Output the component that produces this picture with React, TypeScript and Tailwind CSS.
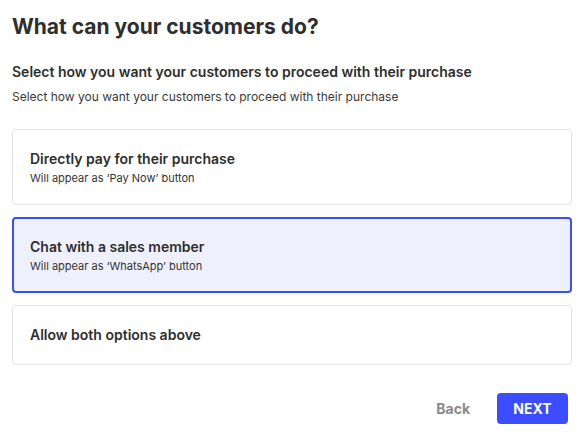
import { useState } from "react"

const options = [
  { id: "pay", title: "Directly pay for their purchase", note: "Will appear as ‘Pay Now’ button" },
  { id: "chat", title: "Chat with a sales member", note: "Will appear as ‘WhatsApp’ button" },
  { id: "both", title: "Allow both options above", note: "" },
]

export default function App() {
  const [selected, setSelected] = useState("chat")

  return (
    <div className="min-h-[436px] w-[585px] bg-white pl-3 pr-[13px] pt-[11px] text-[#2e2e2e] [font-family:Inter,'Liberation_Sans',sans-serif]">
      <h1 className="text-[21px] font-bold leading-[32px]">What can your customers do?</h1>

      <h2 className="mt-[19px] text-[14px] font-semibold leading-[20px]">
        Select how you want your customers to proceed with their purchase
      </h2>
      <p className="mt-[7px] text-[12px] leading-[16px] text-[#3a3a3a]">
        Select how you want your customers to proceed with their purchase
      </p>

      <div className="mt-[24px] flex flex-col gap-[12px]">
        {options.map((o) => {
          const active = selected === o.id
          return (
            <button
              key={o.id}
              onClick={() => setSelected(o.id)}
              className={
                active
                  ? "rounded-[4px] border-2 border-[#3c4cff] bg-[#eef0fd] px-[16px] py-[17px] text-left"
                  : "rounded-[4px] border border-[#e6e6e6] bg-white px-[17px] py-[18px] text-left"
              }
            >
              <div className="text-[14px] font-semibold leading-[22px]">{o.title}</div>
              {o.note && <div className="text-[11px] leading-[16px] text-[#333]">{o.note}</div>}
            </button>
          )
        })}
      </div>

      <div className="mt-[28px] flex items-center justify-end gap-[27px] pr-[4px]">
        <button className="text-[14px] font-bold text-[#8a8a8a]">Back</button>
        <button className="h-[31px] w-[71px] rounded-[4px] bg-[#3c4cff] text-[14px] font-bold text-white">NEXT</button>
      </div>
    </div>
  )
}
